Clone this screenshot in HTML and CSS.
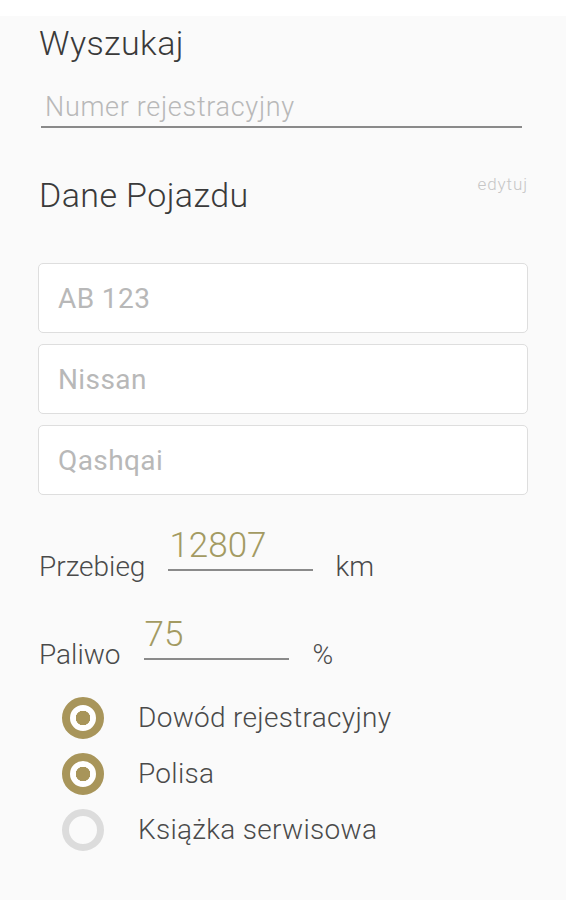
FILE: index.html
```html
<!DOCTYPE html>
<html>
  <head>
    <meta charset="utf-8">
    <title>Dane Pojazdu</title>
    <link rel="stylesheet" href="styles.css">
  </head>
  <body>
    <div id="div_main">

      <div class="sect_title">Wyszukaj</div>
      <input id="in_search" class="line_input" type="text" placeholder="Numer rejestracyjny"/>

      <div class="row_header">
        <span class="sect_title">Dane Pojazdu</span>
        <span class="link_edit">edytuj</span>
      </div>

      <div class="box_list">
        <input class="box_input" type="text" value="AB 123"/>
        <input class="box_input" type="text" value="Nissan"/>
        <input class="box_input" type="text" value="Qashqai"/>
      </div>

      <div class="row_unit row_mileage">
        <span class="lbl">Przebieg</span>
        <input class="unit_input" type="text" value="12807"/>
        <span class="lbl">km</span>
      </div>

      <div class="row_unit row_fuel">
        <span class="lbl">Paliwo</span>
        <input class="unit_input" type="text" value="75"/>
        <span class="lbl">%</span>
      </div>

      <div class="radio_list">
        <div class="radio_row"><span class="radio on"></span><span class="lbl">Dowód rejestracyjny</span></div>
        <div class="radio_row"><span class="radio on"></span><span class="lbl">Polisa</span></div>
        <div class="radio_row"><span class="radio"></span><span class="lbl">Książka serwisowa</span></div>
      </div>

    </div>
  </body>
</html>
```

FILE: styles.css
```css
      body {
        margin: 0;
        background-color: #ffffff;
        font-family: Roboto, "Liberation Sans", sans-serif;
        font-weight: 300;
        color: #444444;
      }

      input {
        font-family: Roboto, "Liberation Sans", sans-serif;
        outline: none;
        margin: 0;
      }

      #div_main {
        margin-top: 16px;
        min-height: 884px;
        background-color: #fafafa;
        padding: 7px 38px 0 38px;
        box-sizing: border-box;
      }

      .sect_title {
        display: block;
        font-size: 34px;
        line-height: 40px;
        letter-spacing: 0.4px;
        color: #3a3a3a;
        padding-left: 1px;
      }

      .line_input {
        display: block;
        width: 477px;
        margin: 28px 0 0 3px;
        padding: 0 0 3px 4px;
        box-sizing: content-box;
        border: none;
        border-bottom: 2px solid #8a8a8a;
        background: transparent;
        font-size: 27px;
        font-weight: 300;
        line-height: 32px;
        height: 32px;
        letter-spacing: 0.7px;
        color: #444444;
      }

      .line_input::placeholder {
        color: #b8b8b8;
      }

      .row_header {
        display: flex;
        justify-content: space-between;
        align-items: flex-start;
        margin-top: 47px;
      }

      .link_edit {
        font-size: 17px;
        line-height: 20px;
        letter-spacing: 0.9px;
        color: #c6c6c6;
        margin-top: -1px;
      }

      .box_list {
        display: flex;
        flex-direction: column;
        gap: 11px;
        margin-top: 48px;
      }

      .box_input {
        display: block;
        width: 100%;
        height: 70px;
        box-sizing: border-box;
        border: 1px solid #dedede;
        border-radius: 5px;
        background-color: #ffffff;
        padding: 0 19px;
        font-size: 28px;
        font-weight: 400;
        letter-spacing: 0.4px;
        color: #b8b8b8;
      }

      .lbl {
        font-size: 28px;
        line-height: 32px;
        letter-spacing: 0.3px;
        color: #4a4a4a;
      }

      .row_unit {
        display: flex;
        align-items: flex-end;
        padding-left: 1px;
      }

      .row_unit .lbl {
        letter-spacing: 0;
      }

      .unit_input {
        width: 144px;
        height: 40px;
        border: none;
        border-bottom: 2px solid #8a8a8a;
        background: transparent;
        padding: 0 0 3px 1px;
        font-size: 35px;
        font-weight: 300;
        line-height: 40px;
        color: #a39a62;
      }

      .row_mileage {
        margin-top: 31px;
      }

      .row_mileage .unit_input {
        margin: 0 22px 12px 23px;
      }

      .row_fuel {
        margin-top: 32px;
      }

      .row_fuel .unit_input {
        margin: 0 24px 11px 23px;
      }

      .radio_list {
        display: flex;
        flex-direction: column;
        gap: 14px;
        margin-top: 26px;
        padding-left: 24px;
      }

      .radio_row {
        display: flex;
        align-items: center;
        gap: 34px;
      }

      .radio {
        width: 42px;
        height: 42px;
        box-sizing: border-box;
        border-radius: 50%;
        border: 7px solid #dcdcdc;
        background-color: #fafafa;
        flex-shrink: 0;
      }

      .radio.on {
        border: 8px solid #a8955a;
        background: radial-gradient(circle, #a8955a 0 7px, #ffffff 7.5px);
      }
```
